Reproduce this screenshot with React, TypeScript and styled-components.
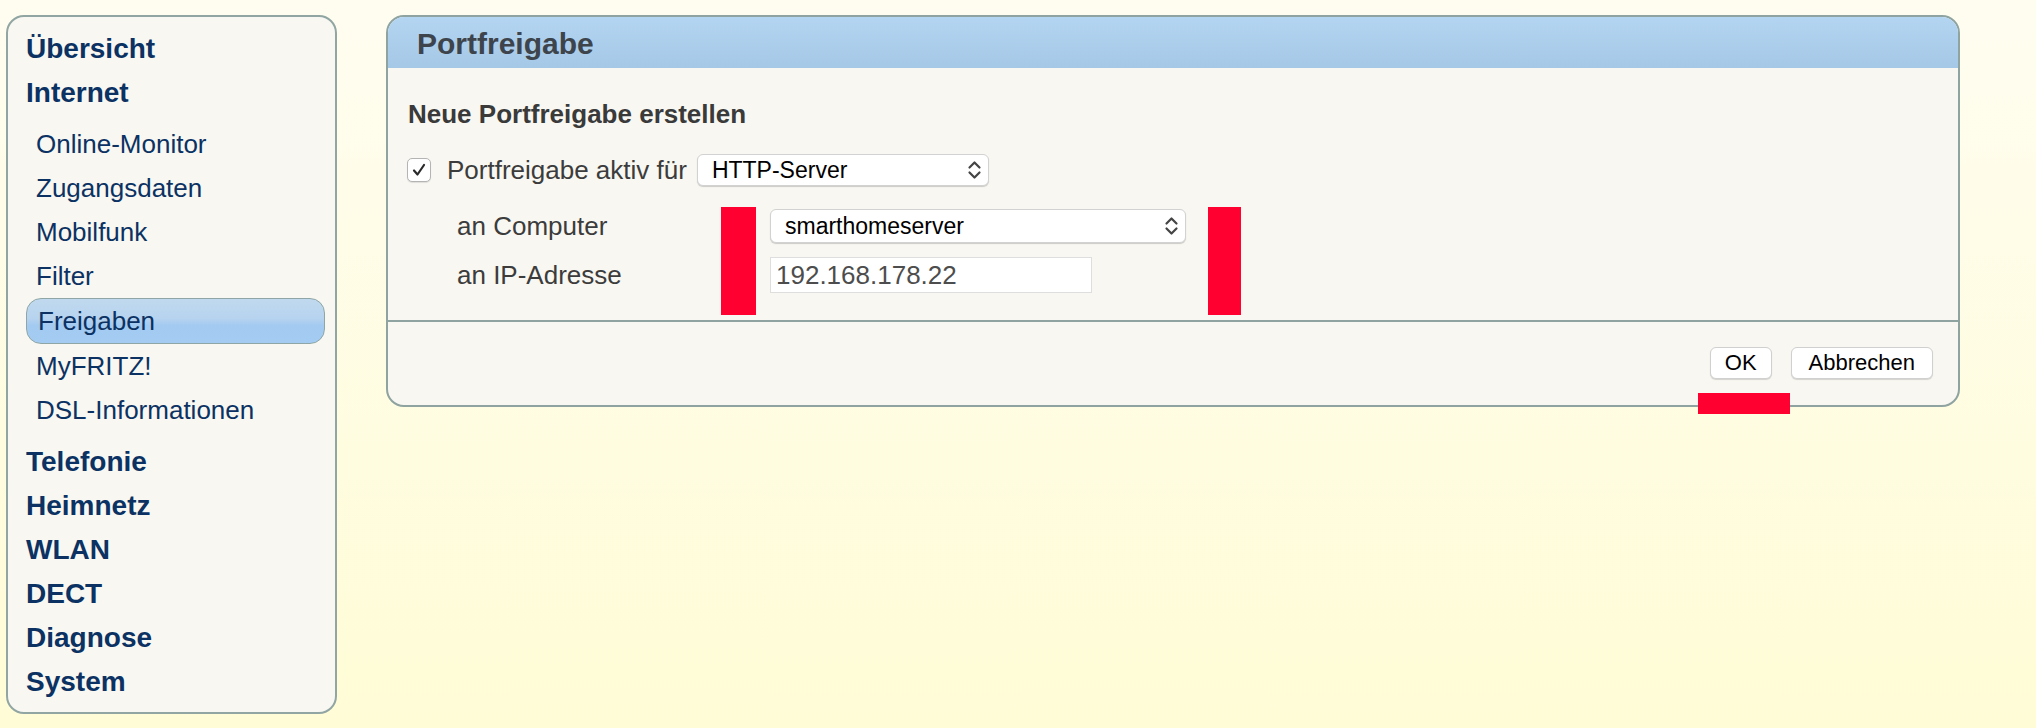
import React from "react";
import styled, { createGlobalStyle } from "styled-components";

const GlobalStyle = createGlobalStyle`
  html, body {
    margin: 0;
    padding: 0;
  }
  body {
    font-family: "Liberation Sans", Arial, Helvetica, sans-serif;
    background: linear-gradient(180deg, #fffdf0 0%, #fffcd6 100%);
    min-height: 728px;
  }
`;

const Page = styled.div`
  display: flex;
  align-items: flex-start;
  gap: 49px;
  padding: 15px 0 0 6px;
  min-height: 713px;
`;

const Sidebar = styled.nav`
  box-sizing: border-box;
  width: 331px;
  background: #f8f7f2;
  border: 2px solid #91a6a3;
  border-radius: 18px;
  padding: 10px 10px 8px 18px;
`;

const TopItem = styled.div`
  height: 44px;
  line-height: 44px;
  font-size: 28px;
  font-weight: bold;
  color: #0b3262;
`;

const SubList = styled.div`
  display: flex;
  flex-direction: column;
  margin: 7px 0 8px;
`;

const SubItem = styled.div<{ $active?: boolean }>`
  box-sizing: border-box;
  height: ${(p) => (p.$active ? "46px" : "44px")};
  line-height: 44px;
  font-size: 26px;
  color: #0b3262;
  padding-left: ${(p) => (p.$active ? "11px" : "10px")};
  border-radius: 15px;
  border: ${(p) => (p.$active ? "1px solid #8ea6a5" : "none")};
  background: ${(p) =>
    p.$active ? "linear-gradient(180deg, #c0d9ee 0%, #b6d3ef 45%, #a3caf1 60%, #a4cbf1 100%)" : "transparent"};
`;

const Panel = styled.section`
  box-sizing: border-box;
  width: 1574px;
  background: #f8f7f2;
  border: 2px solid #8fa3a0;
  border-radius: 18px;
`;

const PanelHeader = styled.header`
  height: 51px;
  line-height: 53px;
  padding-left: 29px;
  border-radius: 16px 16px 0 0;
  background: linear-gradient(180deg, #b3d5f2 0%, #a5c8e6 100%);
  font-size: 30px;
  font-weight: bold;
  color: #3d444b;
`;

const PanelBody = styled.div`
  padding: 28px 20px 5px;
  border-bottom: 2px solid #8fa3a0;
`;

const Heading = styled.h2`
  margin: 0;
  height: 36px;
  line-height: 36px;
  font-size: 26px;
  font-weight: bold;
  color: #3a3a3a;
`;

const CheckRow = styled.div`
  display: flex;
  align-items: center;
  height: 32px;
  margin-top: 22px;
  font-size: 26px;
  color: #3c3c3c;
`;

const CheckBox = styled.span`
  box-sizing: border-box;
  display: inline-flex;
  align-items: center;
  justify-content: center;
  width: 24px;
  height: 24px;
  margin: 0 16px 0 -1px;
  background: #fff;
  border: 1px solid #b4b4b4;
  border-radius: 5px;
  box-shadow: 0 1px 1px rgba(0, 0, 0, 0.1);
`;

const Label = styled.span`
  white-space: nowrap;
`;

const Select = styled.div<{ $width: number; $height: number }>`
  box-sizing: border-box;
  display: flex;
  align-items: center;
  justify-content: space-between;
  width: ${(p) => p.$width}px;
  height: ${(p) => p.$height}px;
  padding: 0 6px 0 14px;
  background: #fff;
  border: 1px solid #d2d2d2;
  border-radius: 6px;
  box-shadow: 0 1px 1px rgba(0, 0, 0, 0.18);
  font-size: 23px;
  color: #000;
`;

const SelectAfterLabel = styled.div`
  margin-left: 10px;
`;

const AddrGrid = styled.div`
  display: grid;
  grid-template-columns: 264px 35px 14px 417px 21px 33px;
  grid-template-rows: 38px 10px 40px 20px;
  margin: 21px 0 0 49px;
`;

const AddrLabel = styled.div<{ $row: number }>`
  grid-column: 1;
  grid-row: ${(p) => p.$row};
  align-self: center;
  font-size: 26px;
  color: #3c3c3c;
  line-height: 1;
`;

const Control = styled.div<{ $row: number }>`
  grid-column: 4;
  grid-row: ${(p) => p.$row};
  align-self: center;
  display: flex;
`;

const Redaction = styled.div<{ $col: number }>`
  grid-column: ${(p) => p.$col};
  grid-row: 1 / 5;
  background: #ff0030;
`;

const TextInput = styled.div`
  box-sizing: border-box;
  width: 322px;
  height: 36px;
  padding-left: 5px;
  line-height: 34px;
  background: #fff;
  border: 1px solid #dedede;
  font-size: 26px;
  color: #4d4d4d;
`;

const Footer = styled.footer`
  position: relative;
  display: flex;
  justify-content: flex-end;
  gap: 19px;
  padding: 25px 25px 26px;
`;

const Button = styled.button<{ $pad: number }>`
  box-sizing: border-box;
  height: 32px;
  padding: 0 ${(p) => p.$pad}px;
  background: #fff;
  border: 1px solid #d0d0d0;
  border-radius: 6px;
  box-shadow: 0 1px 1px rgba(0, 0, 0, 0.15);
  font-family: "Liberation Sans", Arial, Helvetica, sans-serif;
  font-size: 22px;
  color: #000;
`;

const FooterRedaction = styled.div`
  position: absolute;
  right: 168px;
  top: 71px;
  width: 92px;
  height: 21px;
  background: #ff0030;
`;

const Chevrons = () => (
  <svg width="15" height="20" viewBox="0 0 15 20" fill="none">
    <path d="M2.5 7.5 L7.5 2.5 L12.5 7.5" stroke="#444" strokeWidth="2.2" strokeLinecap="round" strokeLinejoin="round" />
    <path d="M2.5 12.5 L7.5 17.5 L12.5 12.5" stroke="#444" strokeWidth="2.2" strokeLinecap="round" strokeLinejoin="round" />
  </svg>
);

const Check = () => (
  <svg width="16" height="16" viewBox="0 0 16 16" fill="none">
    <path d="M3 8.5 L6.5 12.5 L13 3" stroke="#2a2a2a" strokeWidth="2.2" strokeLinecap="round" strokeLinejoin="round" />
  </svg>
);

const subItems = ["Online-Monitor", "Zugangsdaten", "Mobilfunk", "Filter", "Freigaben", "MyFRITZ!", "DSL-Informationen"];
const bottomItems = ["Telefonie", "Heimnetz", "WLAN", "DECT", "Diagnose", "System"];

export default function App() {
  return (
    <>
      <GlobalStyle />
      <Page>
        <Sidebar>
          <TopItem>Übersicht</TopItem>
          <TopItem>Internet</TopItem>
          <SubList>
            {subItems.map((s) => (
              <SubItem key={s} $active={s === "Freigaben"}>
                {s}
              </SubItem>
            ))}
          </SubList>
          {bottomItems.map((s) => (
            <TopItem key={s}>{s}</TopItem>
          ))}
        </Sidebar>
        <Panel>
          <PanelHeader>Portfreigabe</PanelHeader>
          <PanelBody>
            <Heading>Neue Portfreigabe erstellen</Heading>
            <CheckRow>
              <CheckBox>
                <Check />
              </CheckBox>
              <Label>Portfreigabe aktiv für</Label>
              <SelectAfterLabel>
                <Select $width={292} $height={32}>
                  <span>HTTP-Server</span>
                  <Chevrons />
                </Select>
              </SelectAfterLabel>
            </CheckRow>
            <AddrGrid>
              <AddrLabel $row={1}>an Computer</AddrLabel>
              <Redaction $col={2} />
              <Control $row={1}>
                <Select $width={416} $height={34}>
                  <span>smarthomeserver</span>
                  <Chevrons />
                </Select>
              </Control>
              <Redaction $col={6} />
              <AddrLabel $row={3}>an IP-Adresse</AddrLabel>
              <Control $row={3}>
                <TextInput>192.168.178.22</TextInput>
              </Control>
            </AddrGrid>
          </PanelBody>
          <Footer>
            <Button $pad={14}>OK</Button>
            <Button $pad={17}>Abbrechen</Button>
            <FooterRedaction />
          </Footer>
        </Panel>
      </Page>
    </>
  );
}
